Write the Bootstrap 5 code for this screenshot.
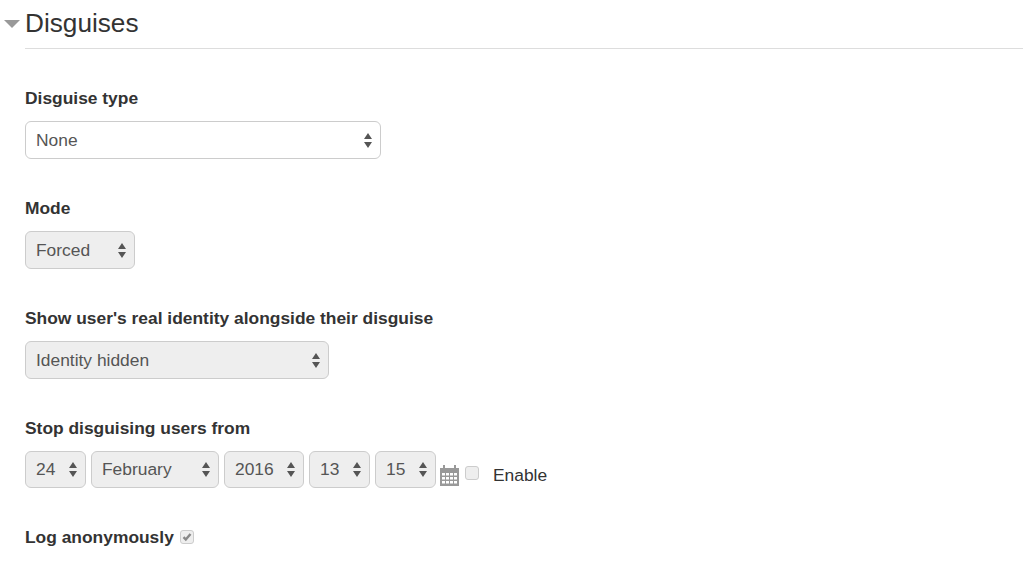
<!DOCTYPE html>
<html lang="en">
<head>
<meta charset="utf-8">
<title>Disguises</title>
<link href="https://cdn.jsdelivr.net/npm/bootstrap@5.3.0/dist/css/bootstrap.min.css" rel="stylesheet">
<style>
html,body{height:569px;overflow:hidden}
body{background:#fff;color:#333;font-family:"Liberation Sans",Arial,sans-serif;font-size:17.4px}
.sheet{padding:0 10px 0 25px}
.sec-head{height:49px;border-bottom:1px solid #ddd;margin-bottom:38px}
.sec-title{font-size:26.2px;font-weight:400;line-height:46px;margin:0;color:#333}
.sec-caret{position:absolute;left:-21px;top:20px;width:0;height:0;border-left:8px solid transparent;border-right:8px solid transparent;border-top:8px solid #999}
.field{height:110px}
.field-label{display:block;font-weight:700;font-size:17.4px;line-height:22px;margin:0 0 12px;color:#333}
.moodle-select{display:block;height:38px;padding:0 24px 0 10px;font-size:17.4px;color:#555;border:1px solid #ccc;border-radius:6px;background-color:#fff;font-family:inherit;
appearance:none;-webkit-appearance:none;
background-image:url("data:image/svg+xml,%3Csvg xmlns='http://www.w3.org/2000/svg' width='8' height='15'%3E%3Cpath d='M4 0l4 6H0zM4 15L0 9h8z' fill='%23555'/%3E%3C/svg%3E");
background-repeat:no-repeat;background-position:right 8px center;background-size:8px 15px}
.moodle-select:disabled{background-color:#eee;opacity:1;color:#555}
.date-row .moodle-select{height:37px}
.w-type{width:356px}.w-mode{width:110px}.w-ident{width:304px}
.w-day{width:61px}.w-month{width:128px}.w-year{width:80px}.w-hour{width:61px}
.date-row{gap:5px}
.cal-ico{width:19px;height:21px;margin:14px 0 0 -1px;flex:none;display:block}
.tick{appearance:none;-webkit-appearance:none;width:14px;height:14px;margin:0;border:1px solid #ccc;border-radius:3px;background:#eee;display:block}
.tick-en{margin:15px 0 0 1px}
.en-label{margin:13px 0 0 9px;line-height:22px;color:#333;font-size:17.4px}
.tick-wrap{position:relative;width:14px;height:14px;display:block;margin-left:6px}
.tick-mark{position:absolute;left:2px;top:2px;width:10px;height:10px;display:block}
.log-row{line-height:22px;margin-top:-1px}
.log-label{font-weight:700;line-height:22px}
</style>
</head>
<body>
<div class="sheet">
  <div class="sec-head position-relative">
    <span class="sec-caret"></span>
    <h3 class="sec-title">Disguises</h3>
  </div>

  <div class="field">
    <label class="field-label" for="dtype">Disguise type</label>
    <select class="moodle-select w-type" id="dtype"><option>None</option></select>
  </div>

  <div class="field">
    <label class="field-label" for="dmode">Mode</label>
    <select class="moodle-select w-mode" id="dmode" disabled><option>Forced</option></select>
  </div>

  <div class="field">
    <label class="field-label" for="dident">Show user's real identity alongside their disguise</label>
    <select class="moodle-select w-ident" id="dident" disabled><option>Identity hidden</option></select>
  </div>

  <div class="field">
    <span class="field-label">Stop disguising users from</span>
    <div class="d-flex align-items-start date-row">
      <select class="moodle-select w-day" disabled><option>24</option></select>
      <select class="moodle-select w-month" disabled><option>February</option></select>
      <select class="moodle-select w-year" disabled><option>2016</option></select>
      <select class="moodle-select w-hour" disabled><option>13</option></select>
      <select class="moodle-select w-hour" disabled><option>15</option></select>
      <svg class="cal-ico" viewBox="0 0 19 21" aria-hidden="true">
        <path fill="#999" d="M0 3h3V0h2v3h9V0h2v3h3v18H0z"/>
        <path fill="#fff" d="M2 8h3v2.500H2zM6 8h3v2.500H6zM10 8h3v2.500h-3zM14 8h3v2.500h-3zM2 12h3v2.500H2zM6 12h3v2.500H6zM10 12h3v2.500h-3zM14 12h3v2.500h-3zM2 16h3v2.500H2zM6 16h3v2.500H6zM10 16h3v2.500h-3zM14 16h3v2.500h-3z"/>
      </svg>
      <input class="tick tick-en" type="checkbox" id="den" aria-label="Enable">
      <label class="en-label" for="den">Enable</label>
    </div>
  </div>

  <div class="d-flex align-items-center log-row">
    <label class="log-label" for="dlog">Log anonymously</label>
    <span class="tick-wrap">
      <input class="tick" type="checkbox" id="dlog" checked disabled>
      <svg class="tick-mark" viewBox="0 0 10 10" aria-hidden="true"><path d="M1.500 5.200l2.300 2.300 4.700-5.500" fill="none" stroke="#888" stroke-width="2.400"/></svg>
    </span>
  </div>
</div>
<script src="https://cdn.jsdelivr.net/npm/bootstrap@5.3.0/dist/js/bootstrap.bundle.min.js"></script>
</body>
</html>
